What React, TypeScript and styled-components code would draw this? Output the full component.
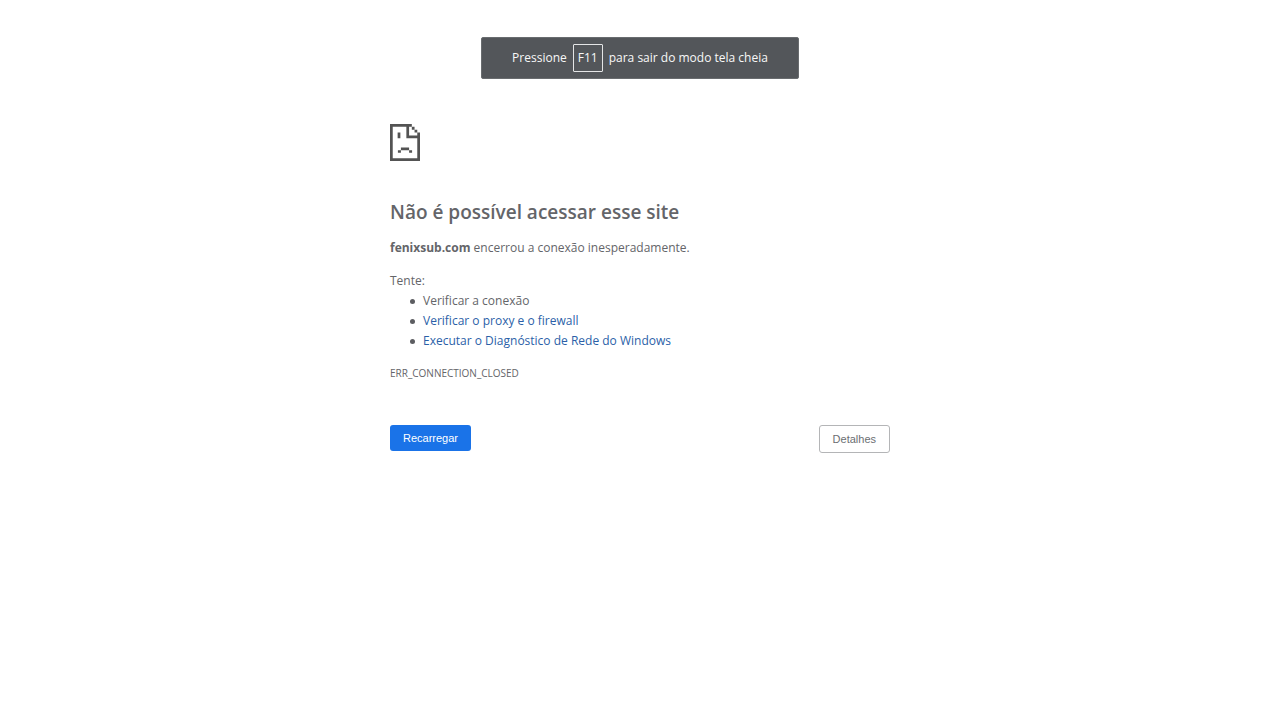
import React from 'react';
import styled, { createGlobalStyle } from 'styled-components';

const GlobalStyle = createGlobalStyle`
  * { box-sizing: border-box; }
  body {
    margin: 0;
    background: #fff;
    color: #646569;
    font: 12px/20px "Open Sans", "Segoe UI", sans-serif;
  }
`;

const Page = styled.div`
  display: flex;
  flex-direction: column;
  align-items: center;
  padding: 37px 24px;
`;

const FullscreenNotice = styled.div`
  display: flex;
  align-items: center;
  justify-content: center;
  gap: 6px;
  padding: 6px 30px;
  border: 1px solid #696c6f;
  border-radius: 2px;
  background: #53565a;
  color: #f8f8f8;
`;

const Key = styled.kbd`
  padding: 4px;
  border: 1px solid #e4e5e6;
  border-radius: 1px;
  font: inherit;
  line-height: 18px;
`;

const Main = styled.main`
  width: 100%;
  max-width: 500px;
  padding-top: 45px;
`;

const SadPage = styled.svg`
  display: block;
  width: 30px;
  height: 37px;
  fill: #535353;
`;

const Title = styled.h1`
  margin: 37px 0 12px;
  font-size: 19px;
  line-height: 28px;
  font-weight: 600;
`;

const Text = styled.p`
  margin: 0;
`;

const Suggestions = styled.section`
  margin-top: 13px;
`;

const List = styled.ul`
  margin: 0;
  padding-left: 20px;
  list-style: none;
`;

const Item = styled.li`
  display: flex;
  align-items: center;
  gap: 8px;

  &::before {
    content: "";
    flex: none;
    width: 5px;
    height: 5px;
    border-radius: 50%;
    background: #5c5d61;
  }
`;

const Link = styled.a`
  color: #2b5fa8;
  text-decoration: none;
`;

const ErrorCode = styled.p`
  margin: 12px 0 0;
  font-size: 10px;
`;

const Actions = styled.div`
  display: flex;
  align-items: flex-start;
  justify-content: space-between;
  margin-top: 42px;
`;

const Button = styled.button<{ $primary?: boolean }>`
  padding: 5px 13px;
  border: ${p => (p.$primary ? '0' : '1px solid #b4b5b7')};
  border-radius: 3px;
  background: ${p => (p.$primary ? '#1a73e8' : '#fff')};
  color: ${p => (p.$primary ? '#fff' : '#6b6e72')};
  font: 11px/16px "Liberation Sans", Arial, sans-serif;
`;

export default function App() {
  return (
    <>
      <GlobalStyle />
      <Page>
        <FullscreenNotice role="status">
          <span>Pressione</span>
          <Key>F11</Key>
          <span>para sair do modo tela cheia</span>
        </FullscreenNotice>
        <Main>
          <SadPage viewBox="0 0 11 13" preserveAspectRatio="none" aria-hidden="true">
            <path d="M0 0H8V1H9V2H10V3H11V13H0ZM1 1V12H10V5H6V1ZM7 1V4H10V3H9V2H8V1Z" fillRule="evenodd" />
            <path d="M2.8 3H3.8V5H2.8ZM4 8.3H7V9.2H4ZM2.9 9.2H4V10.1H2.9ZM7 9.2H8.1V10.1H7Z" />
          </SadPage>
          <Title>Não é possível acessar esse site</Title>
          <Text><strong>fenixsub.com</strong> encerrou a conexão inesperadamente.</Text>
          <Suggestions>
            <Text>Tente:</Text>
            <List>
              <Item>Verificar a conexão</Item>
              <Item><Link href="#proxy">Verificar o proxy e o firewall</Link></Item>
              <Item><Link href="#diagnostico">Executar o Diagnóstico de Rede do Windows</Link></Item>
            </List>
          </Suggestions>
          <ErrorCode>ERR_CONNECTION_CLOSED</ErrorCode>
          <Actions>
            <Button type="button" $primary>Recarregar</Button>
            <Button type="button">Detalhes</Button>
          </Actions>
        </Main>
      </Page>
    </>
  );
}
